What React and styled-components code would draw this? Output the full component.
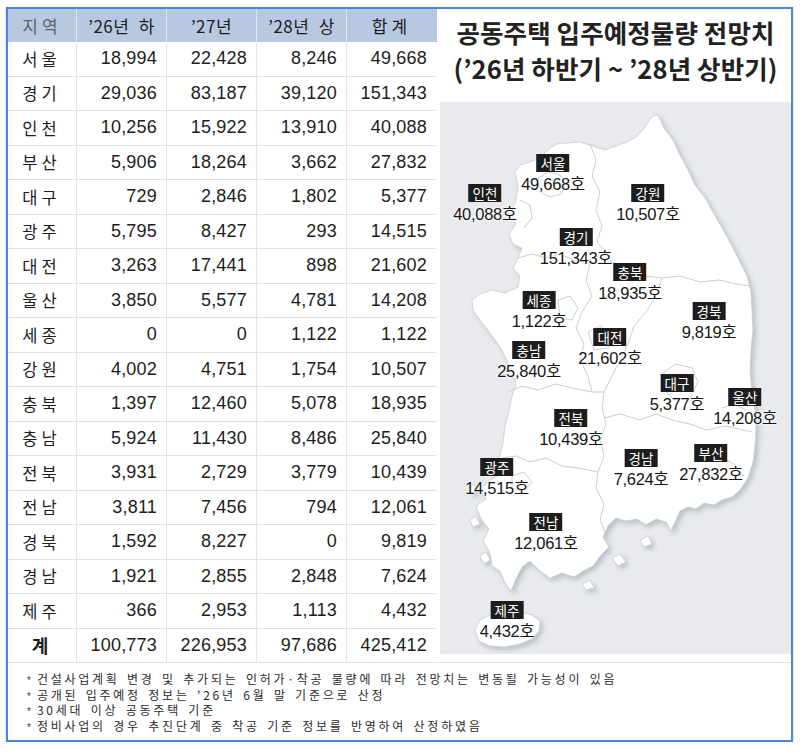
import React from "react";
import styled, { createGlobalStyle } from "styled-components";

const GlobalStyle = createGlobalStyle`
  html, body { margin: 0; padding: 0; background: #ffffff; }
  body { font-family: "Liberation Sans", "Noto Sans CJK KR", sans-serif; }
`;

const Frame = styled.div`
  box-sizing: border-box;
  margin: 7px 0 0 6px;
  width: 787px;
  height: 735px;
  border: 2px solid #4b85d6;
  box-shadow: 0 1px 2px rgba(60, 90, 140, 0.35);
  background: #fff;
  display: flex;
  flex-direction: column;
`;

const Top = styled.div`
  display: grid;
  grid-template-columns: 429px 354px;
  height: 653px;
`;

const TableGrid = styled.div`
  display: grid;
  grid-template-columns: 69px repeat(4, 90px);
  grid-template-rows: 33px repeat(18, 1fr);
`;

const HeadCell = styled.div`
  background: #b7c8e0;
  display: flex;
  align-items: center;
  justify-content: center;
  font-family: "Noto Sans CJK KR", "Liberation Sans", sans-serif;
  font-size: 17px;
  letter-spacing: ${(p) => (p.$spaced ? "4px" : "0.5px")};
  word-spacing: 5px;
  color: ${(p) => (p.$muted ? "#5f656e" : "#1d1d1d")};
  border-right: 1px solid ${(p) => (p.$last ? "transparent" : "rgba(255,255,255,0.55)")};
`;

const Cell = styled.div`
  display: flex;
  align-items: center;
  border-bottom: 1px solid #dfe2e7;
  border-right: 1px solid ${(p) => (p.$last ? "transparent" : "#e2e5ea")};
  color: #1d1d1d;
  min-width: 0;
`;

const NameCell = styled(Cell)`
  justify-content: center;
  font-family: "Noto Sans CJK KR", sans-serif;
  font-size: ${(p) => (p.$total ? "18px" : "16.5px")};
  font-weight: ${(p) => (p.$total ? 700 : 400)};
  letter-spacing: ${(p) => (p.$total ? "0" : "4px")};
  padding-left: ${(p) => (p.$total ? "0" : "3px")};
  padding-right: 4px;
`;

const NumCell = styled(Cell)`
  justify-content: flex-end;
  padding-right: 9px;
  font-family: "Liberation Sans", sans-serif;
  font-size: 18px;
  letter-spacing: 0.2px;
`;

const Side = styled.div`
  display: flex;
  flex-direction: column;
  padding-left: 3px;
  padding-bottom: 8px;
  border-bottom: 1px solid #dfe2e7;
`;

const Title = styled.h1`
  margin: 0;
  height: 93px;
  box-sizing: border-box;
  padding-top: 5px;
  text-align: center;
  font-family: "Noto Sans CJK KR", sans-serif;
  font-weight: 700;
  font-size: 25.5px;
  line-height: 36px;
  letter-spacing: 0.1px;
  color: #222;
`;

const TitleLine = styled.span`
  display: block;
  white-space: nowrap;
`;

const MapPanel = styled.div`
  position: relative;
  flex: 1;
  background: #e8eaed;
  overflow: hidden;
`;

const MapSvg = styled.svg`
  display: block;
  width: 100%;
  height: 100%;
`;

const Pin = styled.div`
  position: absolute;
  transform: translateX(-50%);
  display: flex;
  flex-direction: column;
  align-items: center;
  gap: 2px;
`;

const Tag = styled.span`
  background: #1d1d1d;
  color: #fff;
  font-family: "Noto Sans CJK KR", sans-serif;
  font-size: 13.5px;
  line-height: 18px;
  padding: 0 4px;
`;

const Count = styled.span`
  font-family: "Liberation Sans", "Noto Sans CJK KR", sans-serif;
  font-size: 16.5px;
  line-height: 20px;
  letter-spacing: -0.3px;
  color: #151515;
  white-space: nowrap;
  text-shadow: 0 0 2px #fff, 0 0 2px #fff, 0 0 3px #fff;
`;

const Notes = styled.div`
  flex: 1;
  padding: 10px 0 0 19px;
  font-family: "Noto Sans CJK KR", sans-serif;
  font-size: 12px;
  line-height: 13.7px;
  color: #2b2b2b;
`;

const Note = styled.div`
  white-space: nowrap;
  letter-spacing: 2.75px;
  word-spacing: 2px;
`;

const Star = styled.span`
  display: inline-block;
  font-family: "Liberation Sans", sans-serif;
  font-size: 10px;
  letter-spacing: 0;
  margin-right: 6px;
  color: #444;
`;

const rows = [
  ["서울", "18,994", "22,428", "8,246", "49,668"],
  ["경기", "29,036", "83,187", "39,120", "151,343"],
  ["인천", "10,256", "15,922", "13,910", "40,088"],
  ["부산", "5,906", "18,264", "3,662", "27,832"],
  ["대구", "729", "2,846", "1,802", "5,377"],
  ["광주", "5,795", "8,427", "293", "14,515"],
  ["대전", "3,263", "17,441", "898", "21,602"],
  ["울산", "3,850", "5,577", "4,781", "14,208"],
  ["세종", "0", "0", "1,122", "1,122"],
  ["강원", "4,002", "4,751", "1,754", "10,507"],
  ["충북", "1,397", "12,460", "5,078", "18,935"],
  ["충남", "5,924", "11,430", "8,486", "25,840"],
  ["전북", "3,931", "2,729", "3,779", "10,439"],
  ["전남", "3,811", "7,456", "794", "12,061"],
  ["경북", "1,592", "8,227", "0", "9,819"],
  ["경남", "1,921", "2,855", "2,848", "7,624"],
  ["제주", "366", "2,953", "1,113", "4,432"],
  ["계", "100,773", "226,953", "97,686", "425,412"],
];

const pins = [
  ["서울", "49,668호", 553, 163],
  ["인천", "40,088호", 485, 193],
  ["강원", "10,507호", 648, 193],
  ["경기", "151,343호", 576, 237],
  ["충북", "18,935호", 630, 272],
  ["세종", "1,122호", 539, 300],
  ["경북", "9,819호", 709, 311],
  ["대전", "21,602호", 610, 337],
  ["충남", "25,840호", 529, 350],
  ["대구", "5,377호", 677, 383],
  ["울산", "14,208호", 745, 397],
  ["전북", "10,439호", 571, 418],
  ["경남", "7,624호", 641, 458],
  ["부산", "27,832호", 711, 453],
  ["광주", "14,515호", 497, 467],
  ["전남", "12,061호", 546, 522],
  ["제주", "4,432호", 507, 610],
];

const outline =
  "M658,115 L664,128 L673,140 L680,155 L688,170 L695,185 L705,198 L713,212 L722,228 L732,246 L740,262 L747,276 L751,292 L752,310 L753,330 L751,350 L750,372 L752,392 L755,410 L756,428 L755,445 L753,462 L748,478 L740,490 L732,497 L722,500 L714,505 L704,503 L696,509 L688,507 L680,511 L676,520 L671,531 L666,522 L656,519 L646,525 L637,519 L626,521 L616,518 L608,526 L603,537 L609,547 L601,555 L593,566 L583,571 L574,577 L562,573 L550,578 L540,571 L530,561 L522,567 L516,579 L511,591 L505,583 L500,571 L492,566 L490,553 L483,541 L489,529 L481,519 L476,506 L486,499 L482,487 L492,479 L503,472 L499,459 L503,443 L505,426 L509,411 L512,396 L516,384 L513,373 L507,361 L502,350 L495,340 L487,329 L479,319 L473,310 L472,300 L480,294 L492,290 L505,293 L518,287 L520,276 L513,268 L518,258 L522,248 L513,244 L509,234 L516,224 L511,214 L516,200 L518,186 L515,172 L520,165 L530,162 L540,158 L548,150 L556,144 L568,143 L580,142 L592,146 L605,150 L616,146 L627,142 L636,137 L643,130 L648,122 L653,116 Z";

const jeju =
  "M475,630 L480,620 L492,614 L505,611 L520,612 L532,615 L540,621 L539,631 L532,639 L520,644 L505,647 L490,646 L479,641 Z";

const borders = [
  "M590,144 L596,160 L592,176 L600,192 L596,210 L602,226 L597,242 L606,252 L612,262",
  "M538,178 L548,172 L560,175 L566,184 L561,194 L550,197 L540,192 Z",
  "M520,200 L530,205 L532,218 L524,228",
  "M518,258 L532,254 L546,258 L560,254 L574,260 L590,263 L612,262",
  "M612,262 L628,268 L644,276 L662,278 L680,276 L700,282 L720,280 L736,284 L750,286",
  "M590,263 L586,280 L592,296 L582,312 L576,328 L584,344 L580,360 L588,376 L592,392",
  "M558,300 L570,296 L578,308 L572,320 L560,318 Z",
  "M588,332 L600,326 L612,334 L608,348 L594,350 Z",
  "M662,278 L656,296 L646,312 L634,326 L628,344 L620,360 L612,376 L604,392",
  "M508,392 L522,386 L538,390 L556,384 L572,388 L592,392 L604,392",
  "M604,392 L602,408 L606,424 L600,440 L604,456 L598,472",
  "M604,418 L620,414 L640,420 L656,414 L672,420 L690,424 L706,430 L726,426 L752,432",
  "M664,372 L676,364 L692,368 L698,382 L690,398 L674,400 L664,390 Z",
  "M722,408 L734,404 L746,410",
  "M706,462 L720,456 L734,464 L744,476",
  "M502,458 L516,456 L530,462 L546,458 L562,466 L578,468 L598,472",
  "M512,476 L524,472 L532,482 L524,492 L512,488 Z",
  "M598,472 L596,488 L604,504 L600,520 L606,534",
];

const islands = [
  "M480,556 L486,552 L490,560 L484,564 Z",
  "M470,520 L476,516 L480,524 L473,527 Z",
  "M612,558 L620,554 L626,562 L618,566 Z",
  "M640,540 L648,536 L652,544 L644,547 Z",
  "M582,584 L590,580 L594,588 L586,590 Z",
  "M468,488 L474,484 L477,491 L471,494 Z",
];

export default function App() {
  return (
    <>
      <GlobalStyle />
      <Frame>
        <Top>
          <TableGrid>
            <HeadCell $muted $spaced>지역</HeadCell>
            <HeadCell>’26년 하</HeadCell>
            <HeadCell>’27년</HeadCell>
            <HeadCell>’28년 상</HeadCell>
            <HeadCell $spaced $last>합계</HeadCell>
            {rows.map((r) => {
              const total = r[0] === "계";
              return (
                <React.Fragment key={r[0]}>
                  <NameCell $total={total}>{r[0]}</NameCell>
                  <NumCell>{r[1]}</NumCell>
                  <NumCell>{r[2]}</NumCell>
                  <NumCell>{r[3]}</NumCell>
                  <NumCell $last>{r[4]}</NumCell>
                </React.Fragment>
              );
            })}
          </TableGrid>
          <Side>
            <Title>
              <TitleLine>공동주택 입주예정물량 전망치</TitleLine>
              <TitleLine>(’26년 하반기 ~ ’28년 상반기)</TitleLine>
            </Title>
            <MapPanel>
              <MapSvg viewBox="440 102 351 552" preserveAspectRatio="none">
                <defs>
                  <filter id="shadow" x="-10%" y="-10%" width="130%" height="130%">
                    <feDropShadow dx="3" dy="3" stdDeviation="2.5" floodColor="#9aa1a9" floodOpacity="0.55" />
                  </filter>
                </defs>
                <g filter="url(#shadow)" fill="#ffffff" stroke="#c9cdd2" strokeWidth="0.8">
                  <path d={outline} />
                  <path d={jeju} />
                  {islands.map((d, i) => (
                    <path key={i} d={d} />
                  ))}
                </g>
                <g fill="none" stroke="#c4c8cd" strokeWidth="0.9">
                  {borders.map((d, i) => (
                    <path key={i} d={d} />
                  ))}
                </g>
              </MapSvg>
              {pins.map(([name, val, x, y]) => (
                <Pin key={name} style={{ left: x - 440, top: y - 102 - 9 }}>
                  <Tag>{name}</Tag>
                  <Count>{val}</Count>
                </Pin>
              ))}
            </MapPanel>
          </Side>
        </Top>
        <Notes>
          <Note><Star>*</Star>건설사업계획 변경 및 추가되는 인허가·착공 물량에 따라 전망치는 변동될 가능성이 있음</Note>
          <Note><Star>*</Star>공개된 입주예정 정보는 ’26년 6월 말 기준으로 산정</Note>
          <Note><Star>*</Star>30세대 이상 공동주택 기준</Note>
          <Note><Star>*</Star>정비사업의 경우 추진단계 중 착공 기준 정보를 반영하여 산정하였음</Note>
        </Notes>
      </Frame>
    </>
  );
}
